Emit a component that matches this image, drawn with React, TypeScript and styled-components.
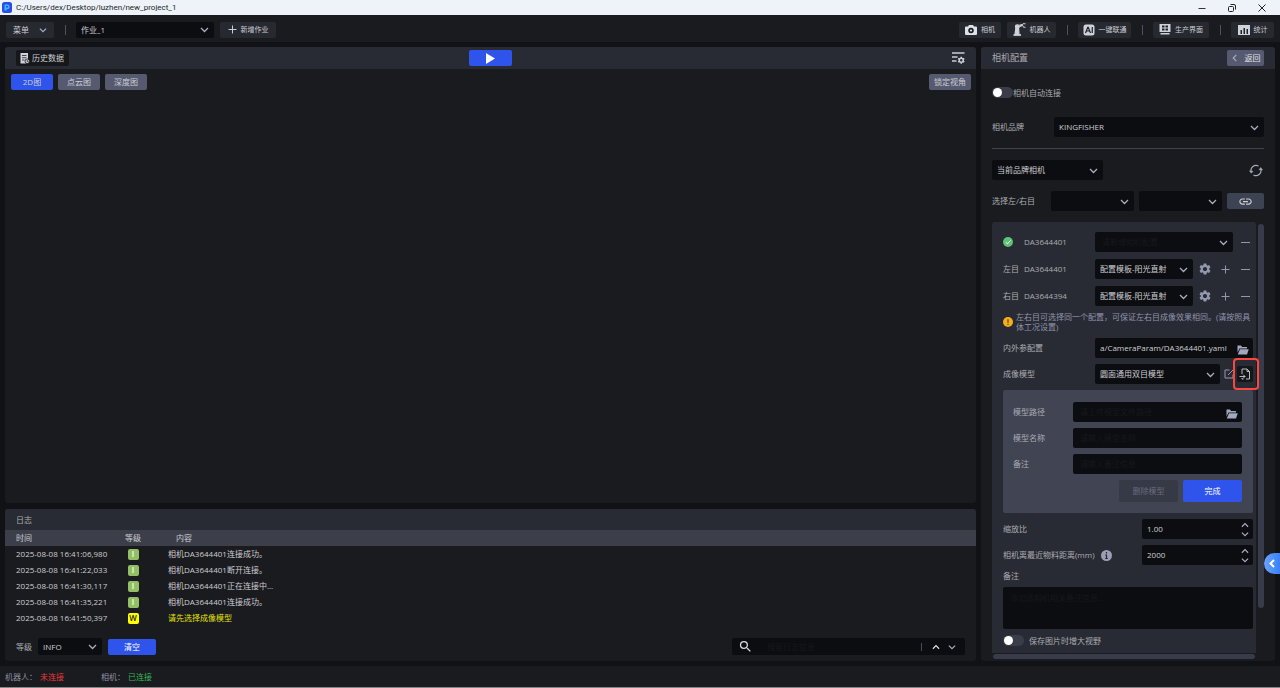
import React, { useState } from "react";
import styled, { createGlobalStyle, css } from "styled-components";
import { MdSettings, MdSearch, MdLink } from "react-icons/md";

const c = {
  page: "#101216",
  panel: "#1a1b1f",
  header: "#292b34",
  field: "#0c0d10",
  button: "#272931",
  slate: "#555a70",
  steel: "#3e4353",
  blue: "#2f54eb",
  text: "#cccdd2",
  label: "#a9abb0",
  icon: "#9298ae",
  hint: "#17181b",
};

const GlobalStyle = createGlobalStyle`
  *, *::before, *::after { box-sizing: border-box; }
  body { margin: 0; background: ${c.page}; }
  body, button, input, select, textarea {
    font-family: "Open Sans", "Noto Sans CJK SC", sans-serif;
    font-size: 8px;
    line-height: 10px;
    color: ${c.text};
  }
  button { border: 0; padding: 0; margin: 0; background: none; cursor: pointer; }
  svg { display: block; flex: none; }
`;

const Page = styled.div`
  display: flex;
  flex-direction: column;
  min-height: 100vh;
`;

const TitleBar = styled.header`
  display: flex;
  align-items: center;
  gap: 4px;
  height: 15px;
  padding: 0 12px 0 2px;
  background: #eef3fa;
  color: #1d1f24;
  font-family: Roboto, "Noto Sans CJK SC", sans-serif;
`;

const WindowButtons = styled.div`
  display: flex;
  gap: 18px;
  margin-left: auto;
`;

const WindowButton = styled.button`
  display: grid;
  place-items: center;
  width: 12px;
  height: 13px;
`;

const Toolbar = styled.nav`
  display: flex;
  align-items: center;
  gap: 6px;
  height: 27px;
  padding: 2px 6px 0;
  background: ${c.panel};
`;

const Spring = styled.div`
  flex: 1;
`;

const Separator = styled.span`
  width: 1px;
  height: 10px;
  margin: 0 4px 0 5px;
  background: #4b5163;
`;

const ToolButton = styled.button<{ $w: number; $small?: boolean }>`
  display: flex;
  align-items: center;
  justify-content: center;
  gap: ${(p) => (p.$small ? 4 : 10)}px;
  width: ${(p) => p.$w}px;
  height: 16px;
  border-radius: 2px;
  background: ${c.button};
  font-size: ${(p) => (p.$small ? 7 : 8)}px;
`;

const SelectBox = styled.span<{ $w?: number; $h?: number }>`
  display: grid;
  align-items: center;
  ${(p) => (p.$w ? css`width: ${p.$w}px;` : css`flex: 1; min-width: 0;`)}
  height: ${(p) => p.$h ?? 20}px;
  border-radius: 2px;
  background: ${c.field};

  > * { grid-area: 1 / 1; }
  > svg { justify-self: end; margin-right: 5px; pointer-events: none; }
`;

const NativeSelect = styled.select<{ $hint?: boolean }>`
  appearance: none;
  width: 100%;
  height: 100%;
  border: 0;
  padding: 0 16px 0 ${(p) => (p.$hint ? 7 : 5)}px;
  background: none;
  color: ${(p) => (p.$hint ? c.hint : c.text)};
`;

const Main = styled.main`
  flex: 1;
  display: grid;
  grid-template-columns: minmax(0, 1fr) 294px;
  gap: 5px;
  padding: 5px;
`;

const Column = styled.div`
  display: flex;
  flex-direction: column;
  gap: 6px;
`;

const Panel = styled.section<{ $grow?: boolean }>`
  display: flex;
  flex-direction: column;
  ${(p) => p.$grow && css`flex: 1;`}
  border-radius: 3px;
  background: ${c.panel};
`;

const PanelHeader = styled.div`
  display: flex;
  align-items: center;
  justify-content: space-between;
  height: 22px;
  padding: 0 11px;
  border-radius: 3px 3px 0 0;
  background: ${c.header};
`;

const ViewerHeader = styled(PanelHeader)`
  display: grid;
  grid-template-columns: 1fr auto 1fr;
`;

const LogHeader = styled(PanelHeader)`
  height: 21px;
  color: ${c.label};
`;

const PanelTitle = styled.h2`
  margin: 0;
  font-size: 9px;
  font-weight: 400;
  color: ${c.label};
`;

const HistoryButton = styled.button`
  display: flex;
  align-items: center;
  justify-self: start;
  gap: 2px;
  height: 16px;
  padding: 0 5px 0 4px;
  border-radius: 2px;
  background: #15171b;
`;

const PlayButton = styled.button`
  display: grid;
  place-items: center;
  width: 43px;
  height: 16px;
  border-radius: 2px;
  background: ${c.blue};
`;

const PlainButton = styled.button`
  display: grid;
  place-items: center;
  justify-self: end;
  color: ${c.text};
`;

const ViewBar = styled.div`
  display: flex;
  gap: 5px;
  padding: 5px 5px 0 6px;
`;

const ViewButton = styled.button<{ $active?: boolean }>`
  width: 42px;
  height: 16px;
  border-radius: 2px;
  background: ${(p) => (p.$active ? c.blue : c.slate)};
`;

const LogTable = styled.table`
  width: 100%;
  table-layout: fixed;
  border-collapse: collapse;

  th, td { height: 16px; padding: 0; text-align: left; font-weight: 400; }
  th { background: #3c3f4a; }
  th:nth-child(1), td:nth-child(1) { width: 107px; padding-left: 11px; }
  th:nth-child(2), td:nth-child(2) { width: 42px; text-align: center; }
  th:nth-child(3) { padding-left: 22px; }
  td:nth-child(3) { padding-left: 14px; }
`;

const LogMessage = styled.td<{ $warn: boolean }>`
  color: ${(p) => (p.$warn ? "#e2e20c" : c.text)};
`;

const LevelBadge = styled.span<{ $warn: boolean }>`
  display: block;
  width: 11px;
  height: 11px;
  margin: 0 auto;
  border-radius: 2px;
  background: ${(p) => (p.$warn ? "#ffff00" : "#93bf65")};
  color: ${(p) => (p.$warn ? "#222" : "#fff")};
  font-weight: 600;
`;

const LogFooter = styled.div`
  display: flex;
  align-items: center;
  gap: 6px;
  padding: 12px 11px 6px;
  color: ${c.label};
`;

const ClearButton = styled.button`
  width: 48px;
  height: 16px;
  border-radius: 2px;
  background: ${c.blue};
  color: #fff;
`;

const SearchBox = styled.div`
  display: flex;
  align-items: center;
  gap: 8px;
  width: 233px;
  height: 17px;
  margin-left: auto;
  padding: 0 9px 0 6px;
  border-radius: 2px;
  background: ${c.field};
  color: #d9dade;
`;

const bareField = css`
  flex: 1;
  min-width: 0;
  border: 0;
  padding: 0;
  background: none;
  outline: none;
  &::placeholder { color: ${c.hint}; opacity: 1; }
`;

const SearchInput = styled.input`
  ${bareField}
  padding-left: 6px;
`;

const SearchDivider = styled.span`
  width: 1px;
  height: 8px;
  margin-right: 2px;
  background: #464b5c;
`;

const BackButton = styled.button`
  display: flex;
  align-items: center;
  justify-content: center;
  gap: 6px;
  width: 37px;
  height: 16px;
  border-radius: 2px;
  background: ${c.slate};
  color: #e2e3e8;
`;

const ConfigBody = styled.div`
  flex: 1;
  display: flex;
  flex-direction: column;
  gap: 11px;
  padding: 18px 11px 2px;
`;

const SwitchLabel = styled.label<{ $gap?: number }>`
  display: flex;
  align-items: center;
  gap: ${(p) => p.$gap ?? 0}px;
  height: 11px;
  color: ${c.label};
`;

const Switch = styled.input`
  appearance: none;
  width: 21px;
  height: 11px;
  margin: 0;
  padding: 1px;
  border-radius: 6px;
  background: #3a3d48;
  &::before {
    content: "";
    display: block;
    width: 9px;
    height: 9px;
    border-radius: 50%;
    background: #fff;
  }
  &:checked { background: ${c.blue}; }
  &:checked::before { margin-left: auto; }
`;

const BrandRow = styled.div`
  display: grid;
  grid-template-columns: 62px 1fr;
  align-items: center;
  padding-top: 8px;
  color: ${c.label};
`;

const Rule = styled.hr`
  width: 100%;
  height: 1px;
  margin: 0;
  border: 0;
  background: #3f424c;
`;

const FilterRow = styled.div`
  display: flex;
  align-items: center;
  justify-content: space-between;
  padding-right: 1px;
`;

const PairRow = styled.div`
  display: grid;
  grid-template-columns: 54px 1fr 1fr 37px;
  align-items: center;
  gap: 5px;
  color: ${c.label};
`;

const LinkButton = styled.button`
  display: grid;
  place-items: center;
  height: 16px;
  border-radius: 2px;
  background: ${c.steel};
  color: ${c.text};
`;

const ScrollArea = styled.div`
  flex: 1;
  display: grid;
  grid-template-columns: 1fr 6px;
  grid-template-rows: 1fr 5px;
  gap: 1px 2px;
`;

const VerticalThumb = styled.div`
  height: 89%;
  margin-top: 2px;
  border-radius: 3px;
  background: #383c4a;
`;

const HorizontalThumb = styled.div`
  margin: 0 1px;
  border-radius: 3px;
  background: #383c4a;
`;

const ConfigBox = styled.div`
  display: flex;
  flex-direction: column;
  gap: 6px;
  padding: 10px 3px 6px 11px;
  border-radius: 3px 3px 0 0;
  background: ${c.header};
  color: ${c.label};
`;

const DeviceList = styled.div`
  display: flex;
  flex-direction: column;
  gap: 7px;
`;

const FormRow = styled.div<{ $label?: number }>`
  display: grid;
  grid-template-columns: ${(p) => p.$label ?? 92}px minmax(0, 1fr);
  align-items: center;
  min-height: 20px;
`;

const DeviceName = styled.span`
  display: grid;
  grid-template-columns: 21px 1fr;
  align-items: center;
`;

const Controls = styled.div`
  display: flex;
  align-items: center;
  gap: 4px;
`;

const IconButton = styled.button<{ $w?: number }>`
  display: grid;
  place-items: center;
  width: ${(p) => p.$w ?? 16}px;
  height: 16px;
  color: ${c.icon};
`;

const ImportButton = styled(IconButton)`
  position: relative;
  border-radius: 2px;
  background: #14161a;
  color: ${c.text};
  &::after {
    content: "";
    position: absolute;
    inset: -8px -6px -8px -4px;
    border: 2px solid #f9493f;
    border-radius: 4px;
  }
`;

const Tip = styled.p`
  display: grid;
  grid-template-columns: 13px 1fr;
  align-items: center;
  height: 20px;
  margin: 0;
  color: #8f94aa;
`;

const Field = styled.div`
  display: flex;
  align-items: center;
  height: 20px;
  padding: 0 4px 0 5px;
  border-radius: 2px;
  background: ${c.field};
`;

const TextInput = styled.input`
  ${bareField}
`;

const HintInput = styled(TextInput)`
  padding-left: 2px;
`;

const FolderButton = styled.button`
  margin-left: 8px;
  padding-top: 3px;
  color: #a3a8bd;
`;

const ModelCard = styled.div`
  display: flex;
  flex-direction: column;
  gap: 6px;
  padding: 12px 11px 11px 10px;
  border-radius: 2px;
  background: #404453;
`;

const ModelActions = styled.div`
  display: flex;
  justify-content: flex-end;
  gap: 5px;
`;

const ActionButton = styled.button<{ $primary?: boolean }>`
  width: 59px;
  height: 22px;
  border-radius: 2px;
  background: ${(p) => (p.$primary ? c.blue : "#363946")};
  color: ${(p) => (p.$primary ? "#fff" : "#686c7b")};
`;

const DistanceLabel = styled.span`
  display: flex;
  align-items: center;
  gap: 6px;
`;

const Steppers = styled.span`
  display: flex;
  flex-direction: column;
  gap: 1px;
`;

const StepButton = styled.button`
  display: block;
`;

const NoteLabel = styled.label`
  height: 10px;
`;

const NoteArea = styled.textarea`
  display: block;
  width: 100%;
  height: 42px;
  border: 0;
  border-radius: 2px;
  padding: 6px 7px;
  background: ${c.field};
  resize: none;
  &::placeholder { color: ${c.hint}; opacity: 1; }
`;

const StatusBar = styled.footer`
  display: flex;
  align-items: center;
  gap: 37px;
  height: 22px;
  padding: 0 5px;
  border-bottom: 1px solid #85868c;
  background: ${c.panel};
  color: #8f93a4;
`;

const StatusItem = styled.span`
  display: flex;
  gap: 3px;
`;

const StatusValue = styled.span<{ $ok?: boolean }>`
  color: ${(p) => (p.$ok ? "#35b558" : "#e8383d")};
`;

const Drawer = styled.button`
  position: fixed;
  right: 0;
  bottom: 114px;
  display: grid;
  place-items: center;
  width: 16px;
  height: 21px;
  border-radius: 11px 0 0 11px;
  background: linear-gradient(90deg, #6ba2ff, #3a80f8);
`;

type ChevronProps = { dir?: "down" | "up" | "left"; color?: string; size?: number; width?: number };

function Chevron({ dir = "down", color = "#a9aec2", size = 8, width = 1.3 }: ChevronProps) {
  const d = { down: "M1 3 4.5 6.5 8 3", up: "M1 6.5 4.5 3 8 6.5", left: "M6 1 2.5 4.5 6 8" }[dir];
  return (
    <svg width={size} height={size} viewBox="0 0 9 9" fill="none" stroke={color} strokeWidth={width}>
      <path d={d} />
    </svg>
  );
}

function Plus() {
  return (
    <svg width="9" height="9" viewBox="0 0 9 9" stroke="currentColor" strokeWidth="1">
      <path d="M4.5 0.5v8M0.5 4.5h8" />
    </svg>
  );
}

function Minus() {
  return (
    <svg width="9" height="9" viewBox="0 0 9 9" stroke="currentColor" strokeWidth="1">
      <path d="M0 4.5h9" />
    </svg>
  );
}

function FolderIcon() {
  return (
    <svg width="12" height="10" viewBox="0 0 24 20" fill="currentColor">
      <path d="M1 1h7l2 3h10v3H5L1 15z" />
      <path d="M6 8.500h17.500L20 19H1.500z" />
    </svg>
  );
}

function LogoIcon() {
  return (
    <svg width="10" height="11" viewBox="0 0 20 22">
      <rect width="20" height="22" rx="5" fill="#2b4bea" />
      <path d="M5 5h7a4 4 0 0 1 3 4v2a4 4 0 0 1-4 3.500H9V17H5z" fill="#3fb8ff" />
      <path d="M8 8h4v3H8z" fill="#2b4bea" />
    </svg>
  );
}

function CameraIcon() {
  return (
    <svg width="12" height="10" viewBox="0 0 24 20" fill="#dfe1e8">
      <path d="M8 0h8l2 3h4a2 2 0 0 1 2 2v13a2 2 0 0 1-2 2H2a2 2 0 0 1-2-2V5a2 2 0 0 1 2-2h4z" />
      <circle cx="12" cy="11" r="5.500" fill="#1b1c21" />
      <circle cx="12" cy="11" r="2.200" />
    </svg>
  );
}

function RobotArmIcon() {
  return (
    <svg width="13" height="13" viewBox="0 0 26 26" fill="none" stroke="#d0d2d9" strokeWidth="2.400">
      <path d="M1 24h15" strokeWidth="3.500" />
      <path d="M4 23 6 8h5l1 15z" fill="#d0d2d9" />
      <circle cx="8.500" cy="7" r="3.500" fill="#d0d2d9" />
      <path d="M9 5.500 18 3M10 9l9-4.500" />
      <path d="M18 4l2-2.500h5M19 4.500l2 4h4" strokeWidth="2" />
    </svg>
  );
}

function AiIcon() {
  return (
    <svg width="12" height="12" viewBox="0 0 24 24">
      <rect x="1" y="1" width="22" height="22" rx="5" fill="#d0d2d9" />
      <path d="M5 18 9.500 6.500h1L15 18M6.500 14h7M18.500 6v12" fill="none" stroke="#1f2127" strokeWidth="2.400" />
    </svg>
  );
}

function ScreenIcon() {
  return (
    <svg width="12" height="11" viewBox="0 0 24 22" fill="#d0d2d9">
      <path d="M1 0h22v16H1z" />
      <path d="M6 3h5v4H6zM13 3h5v4h-5zM6 9h5v4H6zM13 9h5v4h-5z" fill="#1f2127" />
      <path d="M3 18h18v3H3z" />
    </svg>
  );
}

function ChartIcon() {
  return (
    <svg width="12" height="10" viewBox="0 0 24 20">
      <path d="M0 0h24v20H0z" fill="#d0d2d9" />
      <path d="M5 10h3v8H5zM11 6h3v12h-3zM17 8h3v10h-3z" fill="#1f2127" />
    </svg>
  );
}

function HistoryIcon() {
  return (
    <svg width="10" height="11" viewBox="0 0 20 22">
      <path d="M1 0h15v12l-4 9H1z" fill="#d0d2d9" />
      <path d="M4 5h9M4 9.500h9M4 14h5" stroke="#1f2127" strokeWidth="1.600" />
      <circle cx="14.500" cy="16.500" r="4.500" fill="#d0d2d9" stroke="#15171b" strokeWidth="1.600" />
      <path d="M14.500 14v3h2.500" stroke="#15171b" strokeWidth="1.400" fill="none" />
    </svg>
  );
}

function ListSettingsIcon() {
  return (
    <svg width="13" height="12" viewBox="0 0 26 24" fill="none" stroke="currentColor" strokeWidth="2.600">
      <path d="M0 2h25M0 10h11M0 18h9" />
      <circle cx="18.500" cy="16.500" r="4" strokeWidth="3" />
      <path
        d="M18.500 9.500v3M18.500 20.500v3M12.500 13l3 1.800M21.500 18.200l3 1.800M12.500 20l3-1.800M21.500 14.800l3-1.800"
        strokeWidth="3"
      />
    </svg>
  );
}

function RefreshIcon() {
  return (
    <svg width="14" height="13" viewBox="0 0 28 26" fill="none" stroke="#a5aabb" strokeWidth="2.400">
      <path d="M4.500 16A10 10 0 0 1 19 4.200M23.500 10A10 10 0 0 1 9 21.800" />
      <path d="M1 13.500l3.500 5 3.500-4zM20 11.500l3.500-4.500 3.500 5z" fill="#a5aabb" strokeWidth="1" />
    </svg>
  );
}

function CheckIcon() {
  return (
    <svg width="10" height="10" viewBox="0 0 20 20">
      <circle cx="10" cy="10" r="10" fill="#5cc377" />
      <path d="M5.500 10.500 9 13.500l6-6.500" fill="none" stroke="#fff" strokeWidth="2" />
    </svg>
  );
}

function WarnIcon() {
  return (
    <svg width="10" height="10" viewBox="0 0 20 20">
      <circle cx="10" cy="10" r="10" fill="#f8ad1b" />
      <path d="M10 4.500v7M10 13.500v2.500" stroke="#4a3a14" strokeWidth="2.200" />
    </svg>
  );
}

function InfoIcon() {
  return (
    <svg width="11" height="11" viewBox="0 0 22 22">
      <circle cx="11" cy="11" r="11" fill="#9a9fb5" />
      <path d="M11 4v3M11 9v8M8.500 10H11M8.500 17h5" stroke="#23252d" strokeWidth="2.400" fill="none" />
    </svg>
  );
}

function EditIcon() {
  return (
    <svg width="10" height="10" viewBox="0 0 20 20" fill="none" stroke="currentColor" strokeWidth="2">
      <path d="M11 2H2v16h16v-7M8 12 18 2" />
    </svg>
  );
}

function ImportIcon() {
  return (
    <svg width="12" height="12" viewBox="0 0 24 24" fill="none" stroke="currentColor" strokeWidth="1.800">
      <path d="M6 12V2h10l5 5v15h-7M16 2v5h5" />
      <path d="M1 17h11M8.500 13.500 12 17l-3.500 3.500M6 20v2h3" />
    </svg>
  );
}

type PickerProps = { label: string; options: string[]; w?: number; h?: number; hint?: boolean };

function Picker({ label, options, w, h, hint }: PickerProps) {
  return (
    <SelectBox $w={w} $h={h}>
      <NativeSelect aria-label={label} $hint={hint}>
        {options.map((o) => (
          <option key={o}>{o}</option>
        ))}
      </NativeSelect>
      <Chevron size={9} />
    </SelectBox>
  );
}

function NumberField({ id, initial }: { id: string; initial: string }) {
  const [value, setValue] = useState(initial);
  const decimals = initial.includes(".") ? 2 : 0;
  const step = (n: number) => setValue((Number(value) + n).toFixed(decimals));
  return (
    <Field>
      <TextInput id={id} value={value} onChange={(e) => setValue(e.target.value)} />
      <Steppers>
        <StepButton aria-label="增加" onClick={() => step(1)}>
          <Chevron dir="up" size={8} />
        </StepButton>
        <StepButton aria-label="减少" onClick={() => step(-1)}>
          <Chevron size={8} />
        </StepButton>
      </Steppers>
    </Field>
  );
}

const logs = [
  { time: "2025-08-08 16:41:06,980", level: "I", text: "相机DA3644401连接成功。" },
  { time: "2025-08-08 16:41:22,033", level: "I", text: "相机DA3644401断开连接。" },
  { time: "2025-08-08 16:41:30,117", level: "I", text: "相机DA3644401正在连接中..." },
  { time: "2025-08-08 16:41:35,221", level: "I", text: "相机DA3644401连接成功。" },
  { time: "2025-08-08 16:41:50,397", level: "W", text: "请先选择成像模型" },
];

const eyes = [
  { side: "左目", serial: "DA3644401" },
  { side: "右目", serial: "DA3644394" },
];

function LogPanel() {
  return (
    <Panel>
      <LogHeader>日志</LogHeader>
      <LogTable>
        <thead>
          <tr>
            <th>时间</th>
            <th>等级</th>
            <th>内容</th>
          </tr>
        </thead>
        <tbody>
          {logs.map((l) => (
            <tr key={l.time}>
              <td>{l.time}</td>
              <td>
                <LevelBadge $warn={l.level === "W"}>{l.level}</LevelBadge>
              </td>
              <LogMessage $warn={l.level === "W"}>{l.text}</LogMessage>
            </tr>
          ))}
        </tbody>
      </LogTable>
      <LogFooter>
        <span>等级</span>
        <Picker label="等级" options={["INFO"]} w={64} h={17} />
        <ClearButton>清空</ClearButton>
        <SearchBox>
          <MdSearch size={15} />
          <SearchInput aria-label="搜索日志信息" placeholder="搜索日志信息" />
          <SearchDivider />
          <PlainButton aria-label="上一个">
            <Chevron dir="up" color="#e4e5e9" />
          </PlainButton>
          <PlainButton aria-label="下一个">
            <Chevron />
          </PlainButton>
        </SearchBox>
      </LogFooter>
    </Panel>
  );
}

function ModelForm() {
  return (
    <ModelCard>
      <FormRow $label={60}>
        <label htmlFor="model-path">模型路径</label>
        <Field>
          <HintInput id="model-path" placeholder="请上传模型文件路径" />
          <FolderButton aria-label="选择文件">
            <FolderIcon />
          </FolderButton>
        </Field>
      </FormRow>
      <FormRow $label={60}>
        <label htmlFor="model-name">模型名称</label>
        <Field>
          <HintInput id="model-name" placeholder="请输入模型名称" />
        </Field>
      </FormRow>
      <FormRow $label={60}>
        <label htmlFor="model-note">备注</label>
        <Field>
          <HintInput id="model-note" placeholder="请输入备注信息" />
        </Field>
      </FormRow>
      <ModelActions>
        <ActionButton disabled>删除模型</ActionButton>
        <ActionButton $primary>完成</ActionButton>
      </ModelActions>
    </ModelCard>
  );
}

function CameraConfig() {
  return (
    <Panel>
      <PanelHeader>
        <PanelTitle>相机配置</PanelTitle>
        <BackButton>
          <Chevron dir="left" size={8} />
          返回
        </BackButton>
      </PanelHeader>
      <ConfigBody>
        <SwitchLabel>
          <Switch type="checkbox" />
          相机自动连接
        </SwitchLabel>
        <BrandRow>
          <span>相机品牌</span>
          <Picker label="相机品牌" options={["KINGFISHER"]} />
        </BrandRow>
        <Rule />
        <FilterRow>
          <Picker label="相机范围" options={["当前品牌相机"]} w={111} />
          <PlainButton aria-label="刷新">
            <RefreshIcon />
          </PlainButton>
        </FilterRow>
        <PairRow>
          <span>选择左/右目</span>
          <Picker label="左目" options={[""]} />
          <Picker label="右目" options={[""]} />
          <LinkButton aria-label="关联">
            <MdLink size={15} />
          </LinkButton>
        </PairRow>
        <ScrollArea>
          <ConfigBox>
            <DeviceList>
              <FormRow>
                <DeviceName>
                  <CheckIcon />
                  <span>DA3644401</span>
                </DeviceName>
                <Controls>
                  <Picker label="相机配置" options={["请新增相机配置"]} hint />
                  <IconButton aria-label="移除">
                    <Minus />
                  </IconButton>
                </Controls>
              </FormRow>
              {eyes.map((e) => (
                <FormRow key={e.side}>
                  <DeviceName>
                    <span>{e.side}</span>
                    <span>{e.serial}</span>
                  </DeviceName>
                  <Controls>
                    <Picker label={e.side} options={["配置模板-阳光直射"]} />
                    <IconButton aria-label="设置">
                      <MdSettings size={14} />
                    </IconButton>
                    <IconButton aria-label="新增">
                      <Plus />
                    </IconButton>
                    <IconButton aria-label="移除">
                      <Minus />
                    </IconButton>
                  </Controls>
                </FormRow>
              ))}
            </DeviceList>
            <Tip>
              <WarnIcon />
              <span>左右目可选择同一个配置，可保证左右目成像效果相同。(请按照具体工况设置)</span>
            </Tip>
            <FormRow>
              <label htmlFor="param-file">内外参配置</label>
              <Field>
                <TextInput id="param-file" defaultValue="a/CameraParam/DA3644401.yaml" />
                <FolderButton aria-label="选择文件">
                  <FolderIcon />
                </FolderButton>
              </Field>
            </FormRow>
            <FormRow>
              <span>成像模型</span>
              <Controls>
                <Picker label="成像模型" options={["圆面通用双目模型"]} />
                <IconButton aria-label="编辑" $w={9}>
                  <EditIcon />
                </IconButton>
                <ImportButton aria-label="导入">
                  <ImportIcon />
                </ImportButton>
              </Controls>
            </FormRow>
            <ModelForm />
            <FormRow $label={139}>
              <label htmlFor="zoom-ratio">缩放比</label>
              <NumberField id="zoom-ratio" initial="1.00" />
            </FormRow>
            <FormRow $label={139}>
              <DistanceLabel>
                <label htmlFor="distance">相机离最近物料距离(mm)</label>
                <InfoIcon />
              </DistanceLabel>
              <NumberField id="distance" initial="2000" />
            </FormRow>
            <NoteLabel htmlFor="note">备注</NoteLabel>
            <NoteArea id="note" placeholder="添加该相机相关备注信息..." />
            <SwitchLabel $gap={5}>
              <Switch type="checkbox" />
              保存图片时增大视野
            </SwitchLabel>
          </ConfigBox>
          <VerticalThumb />
          <HorizontalThumb />
        </ScrollArea>
      </ConfigBody>
    </Panel>
  );
}

export default function App() {
  return (
    <Page>
      <GlobalStyle />
      <TitleBar>
        <LogoIcon />
        <span>C:/Users/dex/Desktop/luzhen/new_project_1</span>
        <WindowButtons>
          <WindowButton aria-label="最小化">
            <svg width="8" height="8" viewBox="0 0 8 8" stroke="#333">
              <path d="M0.500 4.500h7" />
            </svg>
          </WindowButton>
          <WindowButton aria-label="还原">
            <svg width="8" height="8" viewBox="0 0 8 8" stroke="#222" fill="none">
              <rect x="0.500" y="2.500" width="5" height="5" rx="1" />
              <path d="M2.500 0.500h3.500q1.500 0 1.500 1.500v3.500" />
            </svg>
          </WindowButton>
          <WindowButton aria-label="关闭">
            <svg width="8" height="8" viewBox="0 0 8 8" stroke="#222">
              <path d="M0.500 0.500l7 7M7.500 0.500l-7 7" />
            </svg>
          </WindowButton>
        </WindowButtons>
      </TitleBar>
      <Toolbar>
        <ToolButton $w={48}>
          菜单
          <Chevron />
        </ToolButton>
        <Separator />
        <Picker label="作业" options={["作业_1"]} w={138} h={16} />
        <ToolButton $w={56} $small>
          <Plus />
          新增作业
        </ToolButton>
        <Spring />
        <ToolButton $w={42} $small>
          <CameraIcon />
          相机
        </ToolButton>
        <ToolButton $w={49} $small>
          <RobotArmIcon />
          机器人
        </ToolButton>
        <Separator />
        <ToolButton $w={53} $small>
          <AiIcon />
          一键联通
        </ToolButton>
        <Separator />
        <ToolButton $w={56} $small>
          <ScreenIcon />
          生产界面
        </ToolButton>
        <Separator />
        <ToolButton $w={43} $small>
          <ChartIcon />
          统计
        </ToolButton>
      </Toolbar>
      <Main>
        <Column>
          <Panel $grow>
            <ViewerHeader>
              <HistoryButton>
                <HistoryIcon />
                历史数据
              </HistoryButton>
              <PlayButton aria-label="运行">
                <svg width="9" height="11" viewBox="0 0 9 11" fill="#fff">
                  <path d="M0 0 9 5.500 0 11z" />
                </svg>
              </PlayButton>
              <PlainButton aria-label="显示设置">
                <ListSettingsIcon />
              </PlainButton>
            </ViewerHeader>
            <ViewBar>
              <ViewButton $active>2D图</ViewButton>
              <ViewButton>点云图</ViewButton>
              <ViewButton>深度图</ViewButton>
              <Spring />
              <ViewButton>锁定视角</ViewButton>
            </ViewBar>
          </Panel>
          <LogPanel />
        </Column>
        <CameraConfig />
      </Main>
      <StatusBar>
        <StatusItem>
          机器人：
          <StatusValue>未连接</StatusValue>
        </StatusItem>
        <StatusItem>
          相机：
          <StatusValue $ok>已连接</StatusValue>
        </StatusItem>
      </StatusBar>
      <Drawer aria-label="展开">
        <Chevron dir="left" color="#fff" size={9} width={2} />
      </Drawer>
    </Page>
  );
}
